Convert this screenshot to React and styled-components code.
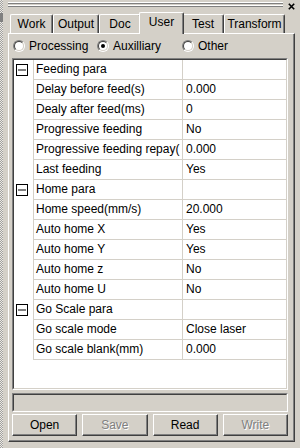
import React from 'react';
import styled, { createGlobalStyle } from 'styled-components';

const Global = createGlobalStyle`
  html, body { margin: 0; padding: 0; }
  body {
    width: 300px; height: 448px; overflow: hidden;
    background: #d4d0c8;
    font-family: "Liberation Sans", Arial, sans-serif;
    font-size: 12px; color: #000;
  }
`;

const Frame = styled.div`
  display: flex;
  width: 300px;
  height: 448px;
  background: #d4d0c8;
`;

const Gripper = styled.div`
  flex: none;
  width: 3px;
  background:
    linear-gradient(#808080, #808080) 0 13px / 3px 9px no-repeat,
    repeating-conic-gradient(#a0a0a0 0 25%, #ece9e2 0 50%) 0 0 / 2px 2px;
`;

const Main = styled.div`
  flex: 1;
  display: flex;
  flex-direction: column;
  padding-left: 5px;
`;

const TitleBar = styled.div`
  height: 12px;
  display: flex;
  align-items: flex-start;
`;

const GripLines = styled.div`
  width: 275px;
  padding-top: 2px;
  display: flex;
  flex-direction: column;
  gap: 1px;
`;

const GripLine = styled.div`
  height: 0;
  border-top: 1px solid #fff;
  border-bottom: 1px solid #808080;
`;

const CloseBox = styled.div`
  margin-left: 5px;
  padding-top: 3px;
  display: flex;
`;

const TabsRow = styled.div`
  height: 21px;
  display: flex;
  align-items: flex-end;
  padding-left: 2px;
  position: relative;
  z-index: 1;
`;

const Tab = styled.div`
  box-sizing: border-box;
  flex: none;
  width: ${p => (p.$active ? p.$w + 4 : p.$w)}px;
  height: ${p => (p.$active ? 22 : 19)}px;
  margin: ${p => (p.$active ? '0 -2px -1px -2px' : '0')};
  position: relative;
  z-index: ${p => (p.$active ? 2 : 1)};
  background: #d4d0c8;
  border-top: 1px solid #fff;
  border-left: 1px solid #fff;
  border-right: 1px solid #404040;
  box-shadow: inset -1px 0 #808080;
  border-radius: 2px 2px 0 0;
  display: flex;
  align-items: center;
  justify-content: center;
  padding-bottom: ${p => (p.$active ? 3 : 0)}px;
  white-space: nowrap;
`;

const Panel = styled.div`
  box-sizing: border-box;
  width: 287px;
  height: 409px;
  background: #d4d0c8;
  border-top: 1px solid #fff;
  border-left: 1px solid #fff;
  border-right: 1px solid #404040;
  border-bottom: 1px solid #404040;
  box-shadow: inset -1px -1px #808080;
  padding: 4px 5px 5px 3px;
  display: flex;
  flex-direction: column;
`;

const RadioRow = styled.div`
  height: 16px;
  display: grid;
  grid-template-columns: 84px 85px auto;
  padding-left: 1px;
  margin-bottom: 4px;
  align-items: center;
`;

const RadioOption = styled.label`
  display: flex;
  align-items: center;
  gap: 4px;
  white-space: nowrap;
`;

const RadioOuter = styled.span`
  box-sizing: border-box;
  width: 12px;
  height: 12px;
  border-radius: 50%;
  border: 1px solid;
  border-color: #808080 #fff #fff #808080;
  display: flex;
`;

const RadioInner = styled.span`
  box-sizing: border-box;
  width: 10px;
  height: 10px;
  border-radius: 50%;
  border: 1px solid;
  border-color: #404040 #d4d0c8 #d4d0c8 #404040;
  background: #fff;
  display: flex;
  align-items: center;
  justify-content: center;
`;

const RadioDot = styled.span`
  width: 4px;
  height: 4px;
  border-radius: 50%;
  background: #000;
`;

const Sunken = styled.div`
  box-sizing: border-box;
  width: 276px;
  border: 1px solid;
  border-color: #808080 #fff #fff #808080;
  display: flex;
  flex-direction: column;
`;

const SunkenInner = styled.div`
  flex: 1;
  border: 1px solid;
  border-color: #404040 #d4d0c8 #d4d0c8 #404040;
  background: ${p => p.$bg};
`;

const GridBox = styled(Sunken)`
  height: 332px;
`;

const StatusBox = styled(Sunken)`
  height: 19px;
  margin-top: 3px;
`;

const PropRow = styled.div`
  display: grid;
  grid-template-columns: 20px 149px 1fr;
  height: 20px;
`;

const Gutter = styled.div`
  box-sizing: border-box;
  border-right: 1px solid #d4d0c8;
  display: flex;
  align-items: center;
  padding-left: 2px;
  padding-bottom: 1px;
`;

const Cell = styled.div`
  box-sizing: border-box;
  border-bottom: 1px solid #d4d0c8;
  border-right: ${p => (p.$divider ? '1px solid #d4d0c8' : 'none')};
  padding-left: ${p => p.$pad}px;
  line-height: 19px;
  white-space: nowrap;
  overflow: hidden;
`;

const ButtonRow = styled.div`
  margin-top: 2px;
  width: 276px;
  display: grid;
  grid-template-columns: repeat(4, 1fr);
  gap: 5px;
`;

const Button = styled.div`
  box-sizing: border-box;
  height: 22px;
  background: #d4d0c8;
  border: 1px solid;
  border-color: #fff #404040 #404040 #fff;
  box-shadow: inset -1px -1px #808080;
  display: flex;
  align-items: center;
  justify-content: center;
  padding-bottom: 1px;
  color: ${p => (p.$disabled ? '#808080' : '#000')};
  text-shadow: ${p => (p.$disabled ? '1px 1px 0 #fff' : 'none')};
`;

const MinusBox = () => (
  <svg width="12" height="12" viewBox="0 0 12 12">
    <rect x="0.5" y="0.5" width="11" height="11" fill="#fff" stroke="#000" />
    <line x1="2" y1="6" x2="10" y2="6" stroke="#000" />
  </svg>
);

const CloseIcon = () => (
  <svg width="7" height="7" viewBox="0 0 7 7">
    <path d="M0.8 0.8 L6.2 6.2 M6.2 0.8 L0.8 6.2" stroke="#000" strokeWidth="1.6" />
  </svg>
);

const tabs = [
  { label: 'Work', w: 43 },
  { label: 'Output', w: 46 },
  { label: 'Doc', w: 42 },
  { label: 'User', w: 41, active: true },
  { label: 'Test', w: 42 },
  { label: 'Transform', w: 61 },
];

const rows = [
  { group: true, name: 'Feeding para' },
  { name: 'Delay before feed(s)', value: '0.000' },
  { name: 'Dealy after feed(ms)', value: '0' },
  { name: 'Progressive feeding', value: 'No' },
  { name: 'Progressive feeding repay(', value: '0.000' },
  { name: 'Last feeding', value: 'Yes' },
  { group: true, name: 'Home para' },
  { name: 'Home speed(mm/s)', value: '20.000' },
  { name: 'Auto home X', value: 'Yes' },
  { name: 'Auto home Y', value: 'Yes' },
  { name: 'Auto home z', value: 'No' },
  { name: 'Auto home U', value: 'No' },
  { group: true, name: 'Go Scale para' },
  { name: 'Go scale mode', value: 'Close laser' },
  { name: 'Go scale blank(mm)', value: '0.000' },
];

const radios = [
  { label: 'Processing' },
  { label: 'Auxilliary', checked: true },
  { label: 'Other' },
];

const buttons = [
  { label: 'Open' },
  { label: 'Save', disabled: true },
  { label: 'Read' },
  { label: 'Write', disabled: true },
];

export default function App() {
  return (
    <>
      <Global />
      <Frame>
        <Gripper />
        <Main>
          <TitleBar>
            <GripLines>
              <GripLine />
              <GripLine />
            </GripLines>
            <CloseBox>
              <CloseIcon />
            </CloseBox>
          </TitleBar>
          <TabsRow>
            {tabs.map(t => (
              <Tab key={t.label} $w={t.w} $active={t.active}>
                {t.label}
              </Tab>
            ))}
          </TabsRow>
          <Panel>
            <RadioRow>
              {radios.map(r => (
                <RadioOption key={r.label}>
                  <RadioOuter>
                    <RadioInner>{r.checked && <RadioDot />}</RadioInner>
                  </RadioOuter>
                  {r.label}
                </RadioOption>
              ))}
            </RadioRow>
            <GridBox>
              <SunkenInner $bg="#fff">
                {rows.map(r => (
                  <PropRow key={r.name}>
                    <Gutter>{r.group && <MinusBox />}</Gutter>
                    <Cell $divider $pad={2}>{r.name}</Cell>
                    <Cell $pad={3}>{r.value || ''}</Cell>
                  </PropRow>
                ))}
              </SunkenInner>
            </GridBox>
            <StatusBox>
              <SunkenInner $bg="#d4d0c8" />
            </StatusBox>
            <ButtonRow>
              {buttons.map(b => (
                <Button key={b.label} $disabled={b.disabled}>
                  {b.label}
                </Button>
              ))}
            </ButtonRow>
          </Panel>
        </Main>
      </Frame>
    </>
  );
}
